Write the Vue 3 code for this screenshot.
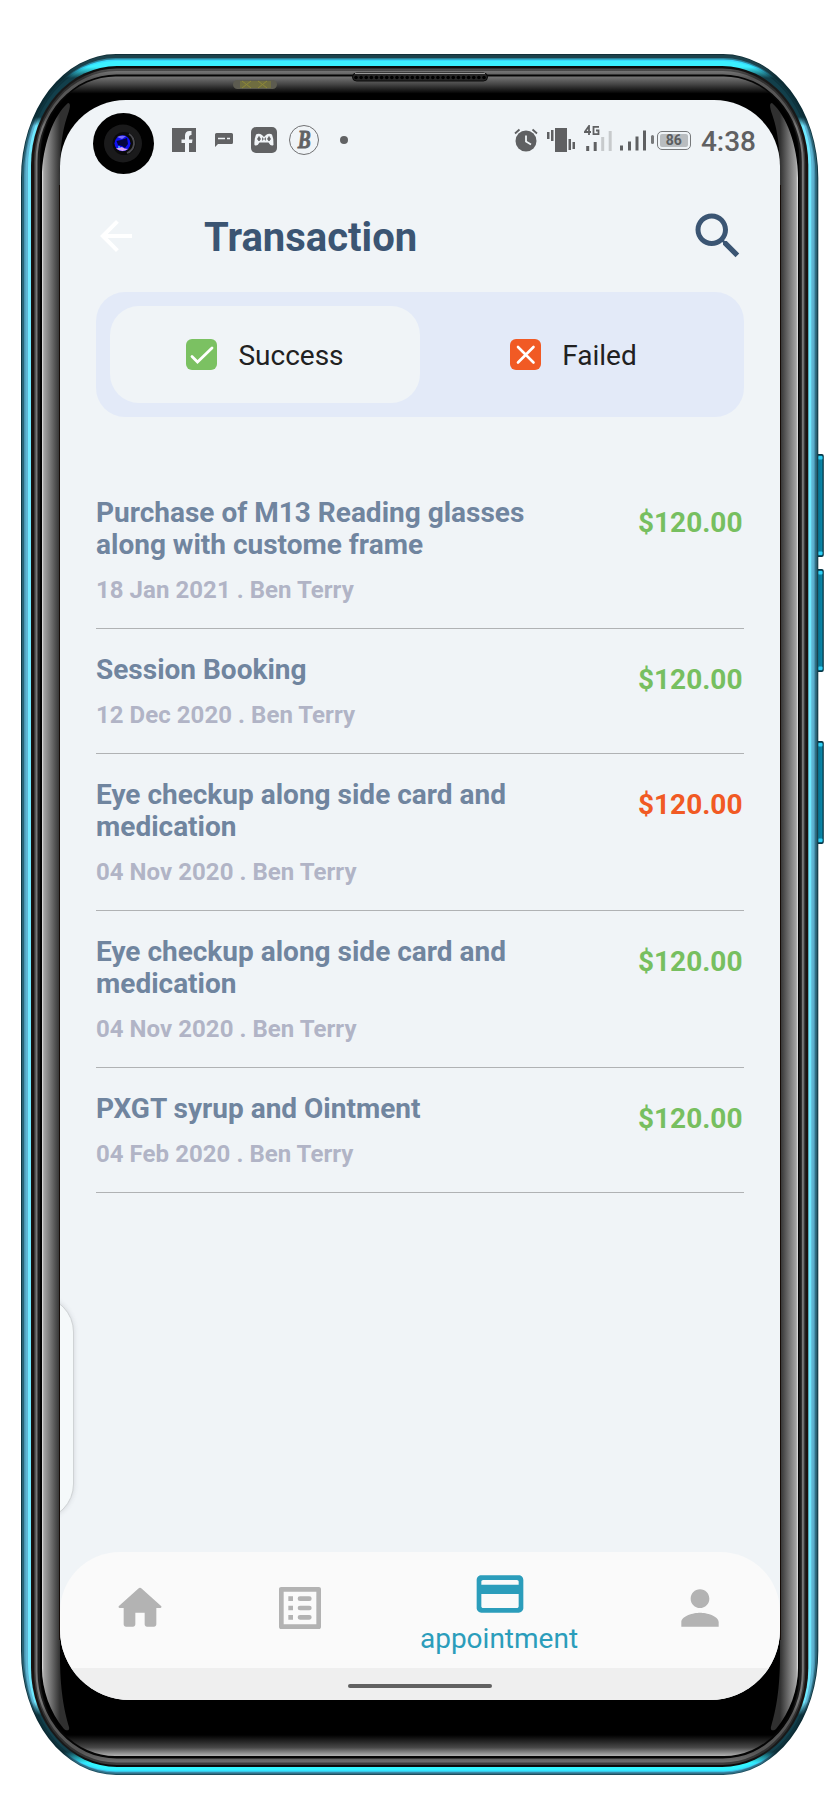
<script setup>
import { ref } from 'vue'

const activeTab = ref('success')

const transactions = [
  { title: 'Purchase of M13 Reading glasses along with custome frame', date: '18 Jan 2021 . Ben Terry', amount: '$120.00', ok: true },
  { title: 'Session Booking', date: '12 Dec 2020 . Ben Terry', amount: '$120.00', ok: true },
  { title: 'Eye checkup along side card and medication', date: '04 Nov 2020 . Ben Terry', amount: '$120.00', ok: false },
  { title: 'Eye checkup along side card and medication', date: '04 Nov 2020 . Ben Terry', amount: '$120.00', ok: true },
  { title: 'PXGT syrup and Ointment', date: '04 Feb 2020 . Ben Terry', amount: '$120.00', ok: true }
]

// Concentric bands of the phone case, outermost first.
// c = [top edge, corner, side, bottom edge]
const bands = [
  { x: 21, t: 54, b: 1775, rx: 95, ry: 124, c: ['#123038', '#0a2a33', '#0f3540', '#1d4d5d'] },
  { x: 22, t: 55, b: 1774, rx: 94, ry: 122, c: ['#1d424c', '#0c2c35', '#2a6274', '#2f7088'] },
  { x: 24, t: 58, b: 1772.5, rx: 92, ry: 117, c: ['#2c8299', '#0f3641', '#4795b2', '#3fa5c8'] },
  { x: 25.5, t: 59.5, b: 1771.5, rx: 90, ry: 112, c: ['#34d9fb', '#0d333d', '#5fb5d3', '#33e4ff'] },
  { x: 28, t: 61, b: 1770, rx: 88, ry: 107, c: ['#3cf0ff', '#123f4b', '#6fe9ff', '#33f5ff'] },
  { x: 31, t: 66, b: 1767, rx: 86, ry: 99, c: ['#0b0b0b', '#181818', '#1a1210', '#0b0b0b'] },
  { x: 34, t: 68.5, b: 1765, rx: 83, ry: 94, c: ['#555555', '#303030', '#3a3a3a', '#3c3c3c'] },
  { x: 35.5, t: 71, b: 1762.5, rx: 81, ry: 91, c: ['#858585', '#565656', '#777777', '#6e6e6e'] },
  { x: 37.5, t: 74.5, b: 1758.5, rx: 79, ry: 87, c: ['#050505', '#050505', '#1c1c1c', '#050505'] },
  { x: 40, t: 75.5, b: 1757, rx: 76, ry: 82, c: ['#050505', '#050505', '#050505', '#050505'] }
]

const bandPath = ({ x, t, b, rx, ry }) => {
  const r = 839.3 - x
  return `M${x + rx} ${t}H${r - rx}A${rx} ${ry} 0 0 1 ${r} ${t + ry}V${b - ry}A${rx} ${ry} 0 0 1 ${r - rx} ${b}H${x + rx}A${rx} ${ry} 0 0 1 ${x} ${b - ry}V${t + ry}A${rx} ${ry} 0 0 1 ${x + rx} ${t}Z`
}

const face = { x: 41.5, t: 76.5, b: 1756, rx: 74, ry: 79 }
const buttons = [454, 569, 741]
const holes = Array.from({ length: 26 }, (_, i) => 356 + i * 5.12)
</script>

<template>
  <div class="stage">
    <svg class="phone" width="840" height="1800" viewBox="0 0 840 1800" aria-hidden="true">
      <defs>
        <linearGradient v-for="(band, i) in bands" :id="'band' + i" :key="i" gradientUnits="userSpaceOnUse" x1="0" y1="50" x2="0" y2="1780">
          <stop :offset="17 / 1730" :stop-color="band.c[0]" />
          <stop :offset="28 / 1730" :stop-color="band.c[1]" />
          <stop :offset="67 / 1730" :stop-color="band.c[1]" />
          <stop :offset="76 / 1730" :stop-color="band.c[2]" />
          <stop :offset="1652 / 1730" :stop-color="band.c[2]" />
          <stop :offset="1665 / 1730" :stop-color="band.c[1]" />
          <stop :offset="1702 / 1730" :stop-color="band.c[1]" />
          <stop :offset="1713 / 1730" :stop-color="band.c[3]" />
        </linearGradient>
        <linearGradient id="face" gradientUnits="userSpaceOnUse" x1="0" y1="76" x2="0" y2="1756">
          <stop offset="0" stop-color="#7a7a7a" />
          <stop offset="0.005" stop-color="#444" />
          <stop offset="0.0105" stop-color="#000" />
          <stop offset="0.9875" stop-color="#000" />
          <stop offset="0.995" stop-color="#484848" />
          <stop offset="1" stop-color="#b4b4b4" />
        </linearGradient>
        <linearGradient id="shine" gradientUnits="userSpaceOnUse" x1="42" y1="0" x2="60" y2="0">
          <stop offset="0" stop-color="#e8e8e8" />
          <stop offset="0.1" stop-color="#a4a4a4" />
          <stop offset="0.5" stop-color="#727272" />
          <stop offset="1" stop-color="#303030" />
        </linearGradient>
        <linearGradient id="key" x1="0" y1="0" x2="1" y2="0">
          <stop offset="0" stop-color="#12a4c6" />
          <stop offset="0.4" stop-color="#08799a" />
          <stop offset="0.75" stop-color="#0a84a4" />
          <stop offset="1" stop-color="#05485b" />
        </linearGradient>
      </defs>
      <g v-for="y in buttons" :key="y">
        <rect x="814" :y="y" width="9.8" height="103" rx="2" fill="#063746" />
        <rect x="817" :y="y + 1.5" width="6" height="100" rx="1.5" fill="url(#key)" />
        <rect x="818" :y="y + 2" width="4.5" height="3.5" rx="1" fill="#2fd0f5" />
        <rect x="818" :y="y + 97.5" width="4.5" height="3.5" rx="1" fill="#2fd0f5" />
      </g>
      <path v-for="(band, i) in bands" :key="i" :d="bandPath(band)" :fill="`url(#band${i})`" />
      <path :d="bandPath(face)" fill="url(#face)" />
      <g v-for="side in [0, 1]" :key="side" :transform="side ? 'matrix(-1 0 0 1 840 0)' : undefined">
        <path d="M68 103C71 103 70 108 68 114C63 128 60 145 60 175V1655C60 1690 64 1710 69 1727C70 1731 66 1731 64 1729C50 1712 42 1690 42 1668V178C42 145 54 115 68 103Z" fill="url(#shine)" />
        <path d="M59.5 185V1640" stroke="#170d08" />
      </g>
      <rect x="233" y="80" width="44" height="9" rx="4.5" fill="#5c5b50" />
      <path d="M240 84.5H271" stroke="#6f6d40" stroke-width="7" />
      <path d="M242 81l9 7m0-7l-9 7M258 81l9 7m0-7l-9 7" stroke="#8e8936" />
      <rect x="352.5" y="73" width="135" height="8" rx="4" fill="#262626" stroke="#090909" />
      <path d="M355 73.5H485" stroke="#999" />
      <circle v-for="x in holes" :key="x" :cx="x" cy="77.5" r="1.8" fill="#000" />
    </svg>

    <main class="screen">
      <header class="status">
        <div class="status-left">
          <svg class="facebook" width="24" height="24" viewBox="0 0 24 24"><path fill="#616264" d="M0 0H24V24H17V15H20L20.5 11.5H17V9.5C17 8 17.5 7 19.5 7V3H17.5C14.5 3 13 5 13 7.5V11.5H9.5V15H13V24H0Z" /></svg>
          <svg class="message" width="18" height="14" viewBox="0 0 18 14"><path fill="#616264" d="M1.5 0H16.5Q18 0 18 1.5V9.5Q18 11 16.5 11H3L0 14V1.5Q0 0 1.5 0Z" /><path d="M3 5.5H10M12 5.5H15" stroke="#f0f4f7" stroke-width="1.5" /></svg>
          <svg class="game" width="26" height="26" viewBox="0 0 26 26"><rect width="26" height="26" rx="5" fill="#616264" /><path d="M5 7.5Q8 6 11 8L13 10L15 8Q18 6 21 7.5Q23 12 22.5 18Q20 20 17.5 15.5H8.5Q6 20 3.5 18Q3 12 5 7.5Z" fill="#f0f4f7" /><path d="M8 9.5L9.5 12L8 14L6.5 12ZM18 9.5L19.5 12L18 14L16.5 12ZM11.5 10.5V13.5M14.5 10.5V13.5M11.5 12H14.5" fill="#616264" stroke="#616264" stroke-width=".8" /></svg>
          <span class="coin"><b>B</b></span>
          <i class="dot"></i>
        </div>
        <div class="status-right">
          <svg width="24" height="24" viewBox="0 0 24 24"><circle cx="12" cy="13" r="10.5" fill="#5f6062" /><path d="M1 5.5L5.5 1.5M18.5 1.5L23 5.5" stroke="#5f6062" stroke-width="1.8" /><path d="M12 7.5V13.5L17 16.5" fill="none" stroke="#f0f4f7" stroke-width="1.8" /></svg>
          <svg class="vibrate" width="28" height="24" viewBox="0 0 28 24"><path fill="#5f6062" d="M0 4H2.5V11H0ZM4 2H6.5V13H4ZM8 0H20V24H8ZM21.5 11H24V22H21.5ZM25.5 14H28V21H25.5Z" /></svg>
          <svg class="cell" width="28" height="27" viewBox="0 0 28 27"><path d="M5 10V1L.8 7H7M15 1.8H9.5V9.2H14.5V5.5H12" fill="none" stroke="#5f6062" stroke-width="1.8" /><path d="M2.2 21h3v5h-3zM9.7 17h3v9h-3z" fill="#5f6062" /><path d="M17.2 12h3v14h-3zM24.7 6h3v20h-3z" fill="#c7cacc" /></svg>
          <svg class="cell2" width="26" height="21" viewBox="0 0 26 21"><path d="M0 15.5h3v5H0zM8 11.5h3v9H8zM15.5 6.5h3v14h-3zM23 .5h3v20h-3z" fill="#5f6062" /></svg>
          <div class="battery"><span>86</span></div>
          <time>4:38</time>
        </div>
        <div class="camera">
          <svg width="61" height="61" viewBox="0 0 61 61">
            <circle cx="30.5" cy="30.5" r="30.5" fill="#010101" />
            <circle cx="30" cy="30.5" r="19" fill="#1a1a1b" />
            <circle cx="31" cy="30.5" r="11.5" fill="#0a0a0b" />
            <path d="M36 21Q41 24 41 31Q40 38 34 40" fill="none" stroke="#4b4b50" stroke-width="1.8" />
            <circle cx="29.5" cy="30.3" r="8" fill="#1010f2" />
            <path d="M23 35.5Q29 40 35 36Q31 36 29 34Z" fill="#d8a2f4" />
            <path d="M24 24Q28 22 33 23L29 26Z" fill="#786cf8" />
            <path d="M23.5 28L28 27L34 25L35 31L32 35L29 33L25 32Z" fill="#04043e" />
            <circle cx="26" cy="34" r="1" fill="#40b8ff" />
          </svg>
        </div>
      </header>

      <div class="appbar">
        <svg class="back" width="48" height="48" viewBox="0 0 24 24"><path fill="#fff" d="M20 11H7.83l5.59-5.59L12 4l-8 8 8 8 1.41-1.41L7.83 13H20v-2z" /></svg>
        <h1>Transaction</h1>
        <svg class="search" width="60" height="60" viewBox="0 0 24 24"><path fill="#3b5573" d="M15.5 14h-.79l-.28-.27C15.41 12.59 16 11.11 16 9.5 16 5.91 13.09 3 9.5 3S3 5.91 3 9.5 5.91 16 9.5 16c1.61 0 3.09-.59 4.23-1.57l.27.28v.79l5 4.99L20.49 19l-4.99-5zm-6 0C7.01 14 5 11.99 5 9.5S7.01 5 9.5 5 14 7.01 14 9.5 11.99 14 9.5 14z" /></svg>
      </div>

      <div class="tabs">
        <button :class="['tab', { active: activeTab === 'success' }]" @click="activeTab = 'success'">
          <svg width="31" height="31" viewBox="0 0 31 31"><rect width="31" height="31" rx="6" fill="#7bc162" /><path d="M6 17.5L11.5 23L26 9" fill="none" stroke="#fff" stroke-width="2.8" stroke-linecap="round" /></svg>
          <span>Success</span>
        </button>
        <button :class="['tab', { active: activeTab === 'failed' }]" @click="activeTab = 'failed'">
          <svg width="31" height="31" viewBox="0 0 31 31"><rect width="31" height="31" rx="6" fill="#f15a24" /><path d="M8 8L23.5 23.5M23.5 8L8 23.5" stroke="#fff" stroke-width="2.6" stroke-linecap="round" /></svg>
          <span>Failed</span>
        </button>
      </div>

      <ul class="list">
        <li v-for="(tx, i) in transactions" :key="i">
          <div class="info">
            <h2>{{ tx.title }}</h2>
            <p>{{ tx.date }}</p>
          </div>
          <strong :class="{ failed: !tx.ok }">{{ tx.amount }}</strong>
        </li>
      </ul>

      <i class="edge-handle"></i>

      <nav class="nav">
        <a><svg width="56" height="56" viewBox="0 0 24 24"><path d="M10 19v-5h4v5c0 .55.45 1 1 1h3c.55 0 1-.45 1-1v-7h1.7c.46 0 .68-.57.33-.87L12.67 3.6c-.38-.34-.96-.34-1.34 0l-8.36 7.53c-.34.3-.13.87.33.87H5v7c0 .55.45 1 1 1h3c.55 0 1-.45 1-1z" /></svg></a>
        <a><svg width="56" height="56" viewBox="0 0 24 24"><path fill-rule="evenodd" d="M3.9 3h16.2c.5 0 .9.4.9.9v16.2c0 .5-.4.9-.9.9H3.9c-.5 0-.9-.4-.9-.9V3.900c0-.5.4-.9.9-.9zM5 5v14h14V5zM7 7h2v2H7zM7 11h2v2H7zM7 15h2v2H7zM12 7h4a1 1 0 0 1 0 2h-4a1 1 0 0 1 0-2zM12 11h4a1 1 0 0 1 0 2h-4a1 1 0 0 1 0-2zM12 15h4a1 1 0 0 1 0 2h-4a1 1 0 0 1 0-2z" /></svg></a>
        <a class="current">
          <svg width="56" height="56" viewBox="0 0 24 24"><path fill-rule="evenodd" d="M4 4h16c1.1 0 2 .9 2 2v12c0 1.1-.9 2-2 2H4c-1.1 0-2-.9-2-2V6c0-1.100.9-2 2-2zM4 12v5.200c0 .500.300.800.800.800h14.400c.500 0 .800-.300.800-.800V12zM4 8h16V6.800c0-.500-.300-.800-.800-.800H4.800c-.500 0-.800.300-.800.800z" /></svg>
          <span>appointment</span>
        </a>
        <a><svg width="56" height="56" viewBox="0 0 24 24"><path d="M12 12c2.21 0 4-1.79 4-4s-1.79-4-4-4-4 1.79-4 4 1.79 4 4 4zm0 2c-2.67 0-8 1.34-8 4v2h16v-2c0-2.66-5.33-4-8-4z" /></svg></a>
      </nav>
      <footer class="gesture"><i></i></footer>
    </main>
  </div>
</template>

<style>
html, body { margin: 0; background: #fff; }
</style>

<style scoped>
.stage {
  position: relative;
  box-sizing: border-box;
  width: 840px;
  height: 1800px;
  padding: 100px 60px;
  overflow: hidden;
  background: #fff;
  font-family: Roboto, "Liberation Sans", sans-serif;
}
.phone { position: absolute; left: 0; top: 0; }
svg { display: block; flex: none; }
.screen {
  position: relative;
  display: flex;
  flex-direction: column;
  width: 720px;
  height: 1600px;
  overflow: hidden;
  background: #f0f4f7;
  border-radius: 66px 66px 70px 70px;
}

.status {
  position: relative;
  display: flex;
  justify-content: space-between;
  align-items: center;
  height: 80px;
  padding: 0 24px 0 112px;
  box-sizing: border-box;
}
.status-left, .status-right { display: flex; align-items: center; }
.message { margin-left: 19px; }
.game { margin-left: 18px; }
.coin {
  box-sizing: border-box;
  width: 30px;
  height: 30px;
  margin-left: 12px;
  border: 1.3px solid #707173;
  border-radius: 50%;
  color: #616264;
  font: italic 700 25px/27px "Liberation Serif", serif;
  text-align: center;
}
.coin b { display: inline-block; transform: scaleX(.78); -webkit-text-stroke: .8px #616264; }
.dot { width: 8px; height: 8px; margin-left: 21px; border-radius: 50%; background: #616264; }
.vibrate { margin-left: 9px; }
.cell { margin: -4px 0 0 9px; }
.cell2 { margin: 1px 0 0 8px; }
.battery {
  position: relative;
  box-sizing: border-box;
  width: 34px;
  height: 19px;
  margin-left: 11px;
  padding: 2px;
  border: 1.6px solid #77797b;
  border-radius: 5px;
}
.battery::before { content: ""; position: absolute; left: -7px; top: 3px; width: 3px; height: 9px; border-radius: 2px; background: #77797b; }
.battery span { display: block; height: 100%; border-radius: 2px; background: #b9bdc0; color: #5c5d5f; font-size: 14px; line-height: 13px; font-weight: 700; text-align: center; }
.status time { margin: 3px 0 0 10px; color: #5f6062; font-size: 28px; font-weight: 500; line-height: 32px; }
.camera { position: absolute; left: 33px; top: 13px; }

.appbar { display: flex; align-items: center; height: 112px; padding: 0 32.5px 0 32px; box-sizing: border-box; }
.appbar h1 { flex: 1; margin: 3px 0 0 64px; color: #3b5573; font-size: 40px; line-height: 48px; font-weight: 700; }

.tabs { display: flex; height: 125px; box-sizing: border-box; margin: 0 36px; padding: 14px; border-radius: 29px; background: #e3eaf8; }
.tab {
  display: flex;
  width: 310px;
  align-items: center;
  justify-content: center;
  gap: 21px;
  padding: 0;
  border: 0;
  border-radius: 29px;
  background: none;
  color: #212121;
  font: 400 28px/32px Roboto, sans-serif;
}
.tab span { margin-top: 2px; }
.tab:last-child { padding-right: 3px; }
.tab.active { background: #f0f4f7; }

.list { margin: 55px 36px 0; padding: 0; list-style: none; }
.list li { display: flex; justify-content: space-between; padding: 25px 0 23px; border-bottom: 1px solid #b0b2b4; }
.info { width: 480px; }
.list h2 { margin: 0; color: #70859f; font-size: 28px; line-height: 32px; font-weight: 700; }
.list p { margin: 15px 0 1px; color: #b1b4c6; font-size: 24px; line-height: 28px; font-weight: 700; letter-spacing: .04px; }
.list strong { margin: 10px 1.5px 0 0; color: #77bf60; font-size: 28px; line-height: 32px; font-weight: 700; }
.list strong.failed { color: #f15a24; }

.edge-handle {
  position: absolute;
  left: -60px;
  top: 1196px;
  box-sizing: border-box;
  width: 73.5px;
  height: 224px;
  border: 1px solid #cfd3d5;
  border-radius: 36px;
  background: #f5f9fa;
  box-shadow: 0 0 5px rgba(70, 80, 90, .18);
}

.nav { display: flex; height: 116px; margin-top: auto; border-radius: 60px 60px 0 0; background: #fafafa; }
.nav a { display: flex; flex-direction: column; align-items: center; width: 160px; padding-top: 28px; box-sizing: border-box; }
.nav svg { fill: #b3b3b3; }
.nav .current { width: 240px; padding-top: 14px; color: #2b9dbb; font-size: 28px; line-height: 32px; }
.nav .current svg { fill: #2b9dbb; }
.nav .current span { margin: 1px 2px 0 0; }
.gesture { display: flex; align-items: flex-start; justify-content: center; height: 32px; background: #efefef; }
.gesture i { width: 144px; height: 4px; margin-top: 16px; border-radius: 2px; background: #616161; }
</style>
